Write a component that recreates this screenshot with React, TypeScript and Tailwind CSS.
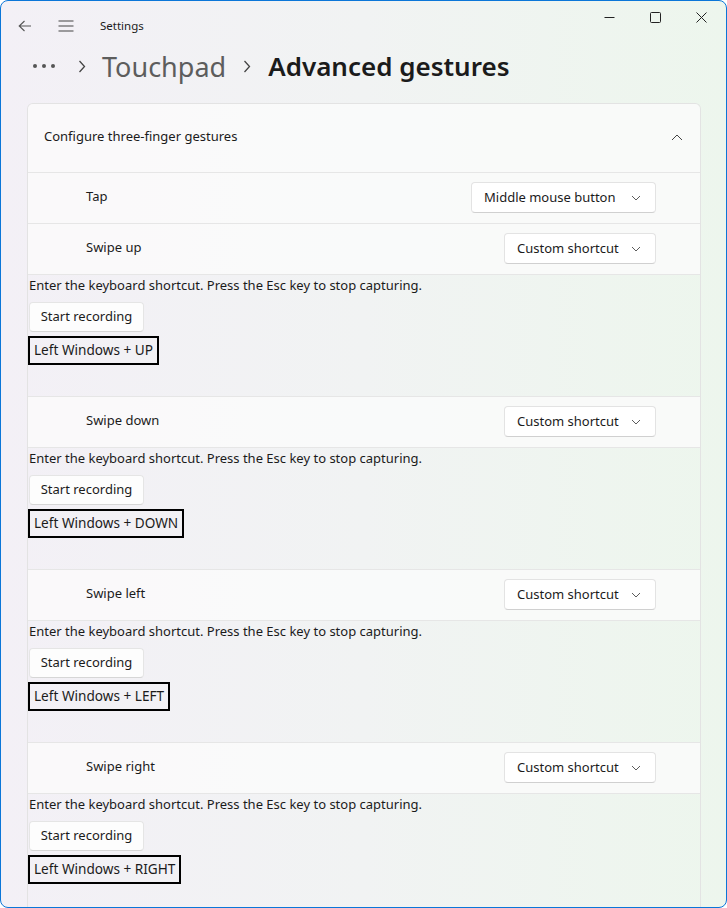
import React from "react";

const font = { fontFamily: '"Segoe UI", "Noto Sans", "Open Sans", sans-serif' };

function Chevron() {
  return (
    <svg width="10" height="6" viewBox="0 0 10 6" className="ml-auto shrink-0">
      <path d="M1 1 L5 5 L9 1" fill="none" stroke="#5c5c5c" strokeWidth="1" />
    </svg>
  );
}

function Dropdown({ label, w }: { label: string; w: string }) {
  return (
    <div
      className={`${w} h-[31px] flex items-center pl-3 pr-[14px] bg-white rounded-[4px] border border-[#e3e3e3] border-b-[#d0d0d0] text-[13px] text-[#1b1b1b]`}
    >
      <span>{label}</span>
      <Chevron />
    </div>
  );
}

function Row({ label, value, w }: { label: string; value: string; w: string }) {
  return (
    <div className="h-[51px] flex items-center pl-[58px] pr-[44px] pb-[2px] bg-[#fbfbfb]/80 border-t border-[#e6e6e6]">
      <span className="text-[13px] text-[#1b1b1b]">{label}</span>
      <div className="ml-auto pt-[1px]">
        <Dropdown label={value} w={w} />
      </div>
    </div>
  );
}

function Expanded({ keys, last }: { keys: string; last?: boolean }) {
  return (
    <div className={`${last ? "h-[130px]" : "h-[122px]"} border-t border-[#e6e6e6] pl-px`}>
      <div className="text-[13px] text-[#1b1b1b] leading-[20px]">
        Enter the keyboard shortcut. Press the Esc key to stop capturing.
      </div>
      <div className="mt-[7px] w-[115px] h-[30px] flex items-center justify-center bg-[#fdfdfd] border border-[#e5e5e5] border-b-[#d6d6d6] rounded-[4px] text-[13px] text-[#1b1b1b]">
        Start recording
      </div>
      <div className="mt-[4px] inline-flex items-center h-[29px] px-[4px] pb-[1px] border-2 border-black text-[13.6px] text-[#1b1b1b] -ml-px">
        {keys}
      </div>
    </div>
  );
}

export default function App() {
  return (
    <div
      style={font}
      className="w-[727px] h-[908px] rounded-[8px] border border-[#0b76d8] overflow-hidden bg-gradient-to-r from-[#f3f0f6] via-[#f1f3f3] to-[#edf6ed] flex flex-col"
    >
      {/* Title bar */}
      <div className="h-[48px] flex items-start shrink-0">
        <div className="flex items-center h-[50px] pl-[17px]">
          <svg width="14" height="12" viewBox="0 0 14 12">
            <path d="M13 6 H1.5 M6.5 1 L1.2 6 L6.5 11" fill="none" stroke="#555" strokeWidth="1.1" />
          </svg>
          <svg width="16" height="12" viewBox="0 0 16 12" className="ml-[26px]">
            <path d="M0.5 1 H15.5 M0.5 6 H15.5 M0.5 11 H15.5" fill="none" stroke="#444" strokeWidth="1.1" />
          </svg>
          <span className="ml-[26px] text-[11.5px] text-[#1b1b1b]">Settings</span>
        </div>
        <div className="ml-auto flex h-[33px] items-center text-[#1b1b1b]">
          <div className="w-[46px] flex justify-center">
            <svg width="11" height="11" viewBox="0 0 11 11"><path d="M0.5 5.5 H10.5" stroke="#222" strokeWidth="1" /></svg>
          </div>
          <div className="w-[46px] flex justify-center">
            <svg width="11" height="11" viewBox="0 0 11 11"><rect x="0.5" y="0.5" width="10" height="10" rx="1" fill="none" stroke="#222" strokeWidth="1" /></svg>
          </div>
          <div className="w-[46px] flex justify-center mr-[2px]">
            <svg width="11" height="11" viewBox="0 0 11 11"><path d="M0.5 0.5 L10.5 10.5 M10.5 0.5 L0.5 10.5" stroke="#222" strokeWidth="1" /></svg>
          </div>
        </div>
      </div>

      {/* Breadcrumb */}
      <div className="h-[54px] shrink-0 flex items-center pl-[31px] pb-[20px]">
        <svg width="24" height="6" viewBox="0 0 24 6">
          <circle cx="3" cy="3" r="2" fill="#555" />
          <circle cx="12" cy="3" r="2" fill="#555" />
          <circle cx="21" cy="3" r="2" fill="#555" />
        </svg>
        <svg width="8" height="13" viewBox="0 0 8 13" className="ml-[22px]">
          <path d="M1.5 1 L6.5 6.5 L1.5 12" fill="none" stroke="#444" strokeWidth="1.3" />
        </svg>
        <span className="ml-[16px] text-[27px] text-[#5d5d5d] leading-none">Touchpad</span>
        <svg width="8" height="13" viewBox="0 0 8 13" className="ml-[17px]">
          <path d="M1.5 1 L6.5 6.5 L1.5 12" fill="none" stroke="#444" strokeWidth="1.3" />
        </svg>
        <span className="ml-[17px] text-[26px] font-semibold text-[#1b1b1b] leading-none">Advanced gestures</span>
      </div>

      {/* Card */}
      <div className="ml-[26px] mr-[25px] flex-1 rounded-t-[6px] border-x border-t border-[#e3e3e3] overflow-hidden">
        <div className="h-[68px] flex items-center pl-[16px] pr-[17px] pb-[2px] bg-[#fbfbfb]/80">
          <span className="text-[13px] text-[#1b1b1b]">Configure three-finger gestures</span>
          <svg width="12" height="7" viewBox="0 0 12 7" className="ml-auto">
            <path d="M1 6 L6 1 L11 6" fill="none" stroke="#444" strokeWidth="1" />
          </svg>
        </div>
        <Row label="Tap" value="Middle mouse button" w="w-[185px]" />
        <Row label="Swipe up" value="Custom shortcut" w="w-[152px]" />
        <Expanded keys="Left Windows + UP" />
        <Row label="Swipe down" value="Custom shortcut" w="w-[152px]" />
        <Expanded keys="Left Windows + DOWN" />
        <Row label="Swipe left" value="Custom shortcut" w="w-[152px]" />
        <Expanded keys="Left Windows + LEFT" />
        <Row label="Swipe right" value="Custom shortcut" w="w-[152px]" />
        <Expanded keys="Left Windows + RIGHT" last />
      </div>
    </div>
  );
}
